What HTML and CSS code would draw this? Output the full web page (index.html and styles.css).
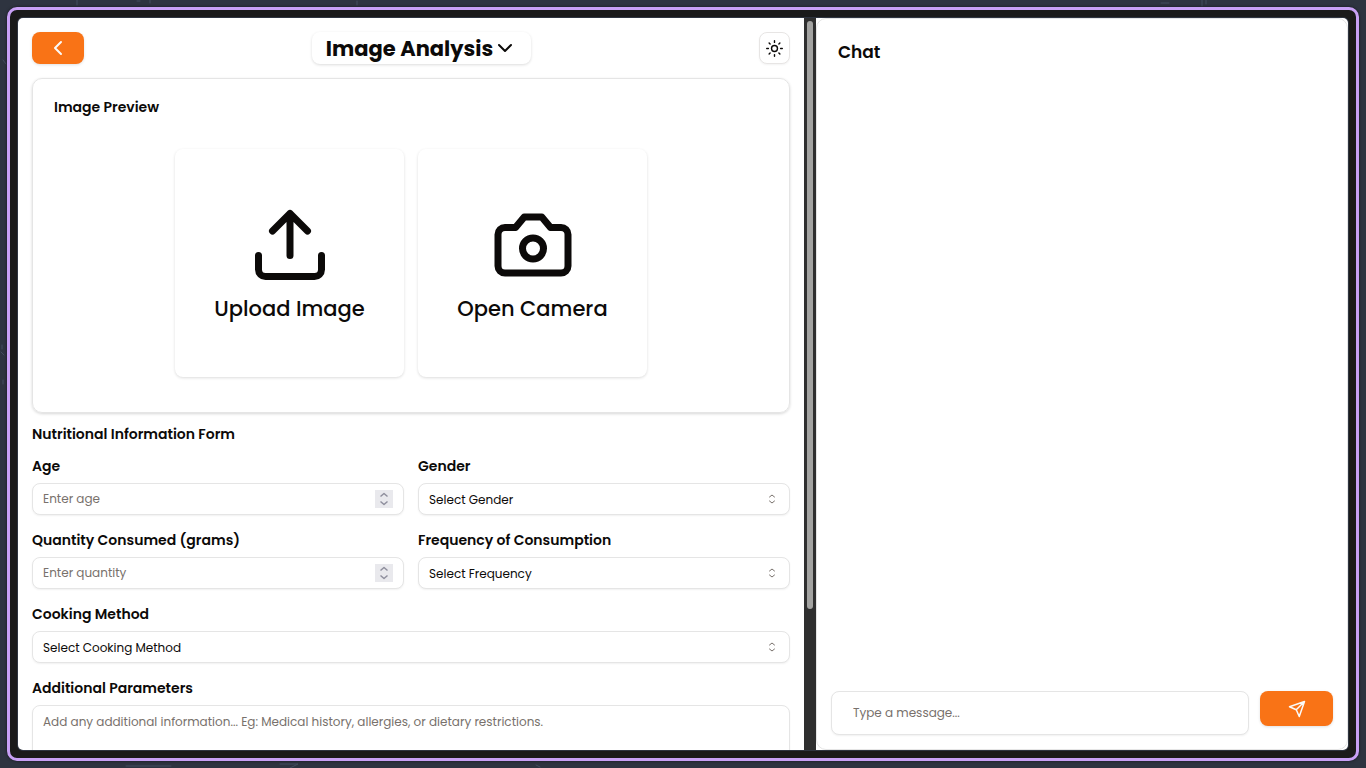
FILE: index.html
```html
<!DOCTYPE html>
<html lang="en">
<head>
<meta charset="utf-8">
<meta name="viewport" content="width=device-width, initial-scale=1">
<title>Image Analysis</title>
<link rel="stylesheet" href="styles.css">
</head>
<body>
<svg class="wallpaper" aria-hidden="true"><path d="M77 0v5M150 0v3M137 1h3M357 1v4M1161 3h8M1202 0v6M1206 0v4M2 345v4M1 352l3 3M3 380v4M3 60l3 4M536 765l4 2M126 766h45M280 764h18l-8 4"/></svg>
<div class="frame">
  <div class="window">
    <main class="analysis">
      <header class="topbar">
        <button class="btn-primary back" type="button" aria-label="Back">
          <svg class="icon" viewBox="0 0 24 24"><path d="m15 18-6-6 6-6"/></svg>
        </button>
        <button class="mode" type="button">Image Analysis<svg class="icon" viewBox="0 0 24 24"><path d="m6 9 6 6 6-6"/></svg></button>
        <button class="theme" type="button" aria-label="Toggle theme">
          <svg class="icon-sun" viewBox="0 0 24 24"><circle cx="12" cy="12" r="4.2"/><path d="M12 1v2.400M12 20.600V23M1 12h2.400M20.600 12H23M4.400 4.400l1.400 1.400M18.200 18.200l1.400 1.400M4.400 19.600l1.400-1.400M18.200 5.800l1.400-1.400"/></svg>
        </button>
      </header>

      <section class="preview">
        <h2 class="heading">Image Preview</h2>
        <div class="tiles">
          <button class="tile" type="button">
            <svg class="icon-large" viewBox="0 0 24 24"><path d="M21 15v4a2 2 0 0 1-2 2H5a2 2 0 0 1-2-2v-4M17 8l-5-5-5 5M12 3v12"/></svg>
            Upload Image
          </button>
          <button class="tile" type="button">
            <svg class="icon-large" viewBox="0 0 24 24"><path d="M14.5 4h-5L7 7H4a2 2 0 0 0-2 2v9a2 2 0 0 0 2 2h16a2 2 0 0 0 2-2V9a2 2 0 0 0-2-2h-3l-2.5-3z"/><circle cx="12" cy="13" r="3"/></svg>
            Open Camera
          </button>
        </div>
      </section>

      <form class="form">
        <h2 class="heading">Nutritional Information Form</h2>
        <div class="fields">
          <div class="field">
            <label for="age">Age</label>
            <div class="control">
              <input id="age" type="number" placeholder="Enter age">
              <svg class="spinner" viewBox="0 0 18 18"><path d="M5.500 6.500 9 3.500l3.500 3M5.500 11.500l3.500 3 3.500-3"/></svg>
            </div>
          </div>
          <div class="field">
            <label for="gender">Gender</label>
            <div class="control">
              <select id="gender"><option>Select Gender</option><option>Male</option><option>Female</option></select>
              <svg class="caret" viewBox="0 0 14 14"><path d="M4.500 5 7 3l2.500 2M4.500 9 7 11l2.500-2"/></svg>
            </div>
          </div>
          <div class="field">
            <label for="quantity">Quantity Consumed (grams)</label>
            <div class="control">
              <input id="quantity" type="number" placeholder="Enter quantity">
              <svg class="spinner" viewBox="0 0 18 18"><path d="M5.500 6.500 9 3.500l3.500 3M5.500 11.500l3.500 3 3.500-3"/></svg>
            </div>
          </div>
          <div class="field">
            <label for="frequency">Frequency of Consumption</label>
            <div class="control">
              <select id="frequency"><option>Select Frequency</option><option>Daily</option><option>Weekly</option></select>
              <svg class="caret" viewBox="0 0 14 14"><path d="M4.500 5 7 3l2.500 2M4.500 9 7 11l2.500-2"/></svg>
            </div>
          </div>
          <div class="field wide">
            <label for="method">Cooking Method</label>
            <div class="control">
              <select id="method"><option>Select Cooking Method</option><option>Baked</option><option>Fried</option></select>
              <svg class="caret" viewBox="0 0 14 14"><path d="M4.500 5 7 3l2.500 2M4.500 9 7 11l2.500-2"/></svg>
            </div>
          </div>
          <div class="field wide">
            <label for="extra">Additional Parameters</label>
            <textarea id="extra" placeholder="Add any additional information... Eg: Medical history, allergies, or dietary restrictions."></textarea>
          </div>
        </div>
      </form>
    </main>
    <div class="track"><div class="thumb"></div></div>
    <section class="chat">
      <h2 class="chat-title">Chat</h2>
      <form class="composer">
        <input class="message" type="text" aria-label="Message" placeholder="Type a message...">
        <button class="btn-primary send" type="button" aria-label="Send">
          <svg class="icon-send" viewBox="0 0 24 24"><path d="M22 2 15 22 11 13 2 9 22 2ZM22 2 11 13"/></svg>
        </button>
      </form>
    </section>
  </div>
</div>
</body>
</html>
```

FILE: styles.css
```css
* { box-sizing: border-box; }

body {
  margin: 0;
  height: 100vh;
  padding: 7px;
  overflow: hidden;
  background: #2e3440;
  color: #0c0a09;
  font-family: Poppins, Inter, "Open Sans", sans-serif;
  font-size: 12px;
}

button, input, select, textarea { font: inherit; color: inherit; margin: 0; }
button { cursor: pointer; }
svg { fill: none; stroke: currentColor; stroke-width: 2; stroke-linecap: round; stroke-linejoin: round; flex: none; }

.wallpaper { position: absolute; inset: 0; width: 100%; height: 100%; color: #434c5e; stroke-width: 1; }

.frame {
  position: relative;
  height: 100%;
  padding: 8px;
  background: #1a1a1a;
  border: 3px solid #c8a0f5;
  border-radius: 10px;
  box-shadow: 0 0 3px rgba(0, 0, 0, .6);
}

.window {
  display: grid;
  grid-template-columns: minmax(0, 786fr) 12px minmax(0, 532fr);
  grid-template-rows: minmax(0, 1fr);
  height: 100%;
  overflow: hidden;
  background: #fff;
  border-radius: 5px;
  box-shadow: 0 0 0 1px #2e3440;
}

.analysis { overflow: hidden; padding: 14px; }

.topbar { display: flex; justify-content: space-between; align-items: center; margin-bottom: 14px; }

.btn-primary {
  display: flex;
  align-items: center;
  justify-content: center;
  border: 0;
  border-radius: 8px;
  background: #f97316;
  color: #fafaf9;
  box-shadow: 0 1px 3px rgba(0, 0, 0, .12);
}
.back { width: 52px; height: 32px; }
.icon { width: 24px; height: 24px; }

.mode {
  display: flex;
  align-items: center;
  height: 32px;
  padding: 0 14px;
  border: 0;
  border-radius: 8px;
  background: #fff;
  box-shadow: 0 1px 3px rgba(0, 0, 0, .14);
  font-size: 21px;
  font-weight: 700;
}

.theme {
  display: flex;
  align-items: center;
  justify-content: center;
  width: 31px;
  height: 32px;
  padding: 0;
  border: 1px solid #e7e5e4;
  border-radius: 8px;
  background: #fff;
  box-shadow: 0 1px 2px rgba(0, 0, 0, .05);
}
.icon-sun { width: 17px; height: 17px; }

.heading { margin: 0; font-size: 14px; font-weight: 600; line-height: 20px; }

.preview {
  padding: 18px 21px 35px;
  border: 1px solid #e5e5e5;
  border-radius: 10px;
  box-shadow: 0 1px 3px rgba(0, 0, 0, .16);
}
.tiles { display: flex; justify-content: center; gap: 14px; margin-top: 32px; }
.tile {
  display: flex;
  flex-direction: column;
  align-items: center;
  justify-content: center;
  gap: 7px;
  width: 229px;
  height: 228px;
  padding: 0;
  border: 0;
  border-radius: 8px;
  background: #fff;
  box-shadow: 0 1px 3px rgba(0, 0, 0, .14);
  font-size: 21px;
  font-weight: 500;
  line-height: 30px;
}
.icon-large { width: 84px; height: 84px; }

.form { margin-top: 11px; }
.fields { display: grid; grid-template-columns: 1fr 1fr; gap: 15px 14px; margin-top: 12px; }
.field { display: flex; flex-direction: column; gap: 7px; min-width: 0; }
.field label { font-size: 14px; font-weight: 600; line-height: 20px; }
.wide { grid-column: 1 / -1; }

.control { position: relative; display: flex; }
.control input, .control select, .field textarea, .message {
  width: 100%;
  border: 1px solid #e5e5e5;
  border-radius: 8px;
  background: #fff;
  outline: 0;
  box-shadow: 0 1px 2px rgba(0, 0, 0, .06);
}
.control input, .control select { height: 32px; padding: 0 10px; appearance: none; }
.control input::-webkit-inner-spin-button { appearance: none; }
::placeholder { color: #78716c; opacity: 1; }
.field textarea { display: block; height: 84px; padding: 6px 10px; line-height: 20px; resize: none; }

.spinner, .caret { position: absolute; top: 0; bottom: 0; margin: auto 0; pointer-events: none; }
.spinner { right: 11px; width: 18px; height: 18px; background: #e9e9ed; color: #8f8f9d; stroke-width: 1.5; stroke-linecap: butt; }
.caret { right: 11px; width: 14px; height: 14px; color: #78716c; stroke-width: 1; }

.track { padding: 3px; background: #2f2f2f; }
.thumb { height: 81%; border-radius: 3px; background: #a3a3a1; }

.chat {
  display: flex;
  flex-direction: column;
  justify-content: space-between;
  padding: 21px 14px 14px;
  border: 1px solid #e5e5e5;
  border-radius: 10px;
}
.chat-title { margin: 0 7px; font-size: 17px; font-weight: 600; line-height: 24px; }
.composer { display: flex; align-items: flex-start; gap: 11px; }
.message { flex: 1; min-width: 0; height: 44px; padding: 0 21px; }
.send { width: 73px; height: 35px; }
.icon-send { width: 18px; height: 18px; }
```
